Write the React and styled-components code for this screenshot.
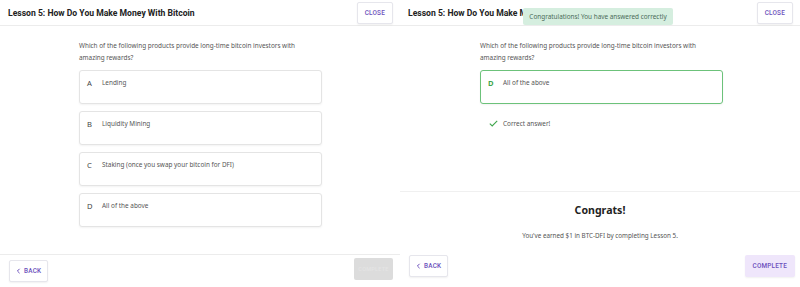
import styled, { createGlobalStyle } from "styled-components";

const GlobalStyle = createGlobalStyle`
  html, body {
    margin: 0;
    padding: 0;
    background: #ffffff;
  }
  body {
    font-family: "Noto Sans", "Open Sans", sans-serif;
    color: #333;
  }
  * {
    box-sizing: border-box;
  }
`;

const Page = styled.div`
  display: flex;
  width: 800px;
  height: 287px;
  overflow: hidden;
`;

const Panel = styled.div`
  position: relative;
  display: flex;
  flex-direction: column;
  width: 400px;
  height: 287px;
  background: #fff;
`;

const Header = styled.div`
  display: flex;
  align-items: center;
  justify-content: space-between;
  height: 26px;
  padding: 0 7px 0 8px;
  border-bottom: 1px solid #ececec;
`;

const Title = styled.h1`
  margin: 0;
  font-family: "Roboto", "Liberation Sans", sans-serif;
  font-weight: 700;
  font-size: 8.6px;
  color: #222;
  white-space: nowrap;
`;

const OutlineButton = styled.button`
  display: flex;
  align-items: center;
  gap: 3px;
  height: 22px;
  padding: 0 ${(p) => p.$padX || 7}px;
  border: 1px solid #e6e6ec;
  border-radius: 2px;
  background: #fff;
  box-shadow: 0 1px 2px rgba(0, 0, 0, 0.06);
  color: #6b4fbb;
  font-family: "Roboto", "Liberation Sans", sans-serif;
  font-size: 6.4px;
  font-weight: 500;
  letter-spacing: 0.2px;
  cursor: pointer;
`;

const Body = styled.div`
  flex: 1;
  display: flex;
  flex-direction: column;
`;

const Quiz = styled.div`
  display: flex;
  flex-direction: column;
  width: 243px;
  margin: 14px 0 0 ${(p) => p.$left}px;
`;

const Question = styled.p`
  margin: 0 0 6px;
  font-size: 6.4px;
  line-height: 12px;
  color: #555;
`;

const Options = styled.div`
  display: flex;
  flex-direction: column;
  gap: 7px;
`;

const Option = styled.div`
  display: flex;
  gap: 8px;
  height: 34px;
  padding: 6px 7px;
  border: ${(p) => (p.$correct ? "1.5px solid #6cc27a" : "1px solid #e4e4e4")};
  border-radius: 3px;
  box-shadow: 0 1px 2px rgba(0, 0, 0, 0.05);
  background: #fff;
`;

const Letter = styled.span`
  font-size: 7.6px;
  line-height: 12px;
  font-weight: ${(p) => (p.$correct ? 700 : 400)};
  color: ${(p) => (p.$correct ? "#3fa64d" : "#444")};
  width: 7px;
`;

const OptionText = styled.span`
  font-size: 6.4px;
  line-height: 12px;
  color: #555;
`;

const Feedback = styled.div`
  display: flex;
  align-items: center;
  gap: 5px;
  margin: 15px 0 0 9px;
  font-size: 6.4px;
  color: #555;
`;

const Congrats = styled.div`
  display: flex;
  flex-direction: column;
  align-items: center;
  margin-top: 63px;
  padding-top: 11px;
  border-top: 1px solid #f0f0f0;
`;

const CongratsTitle = styled.h2`
  margin: 0 0 14px;
  font-size: 10.6px;
  font-weight: 700;
  color: #222;
`;

const CongratsText = styled.p`
  margin: 0;
  font-size: 6.3px;
  color: #555;
`;

const Footer = styled.div`
  display: flex;
  align-items: center;
  justify-content: space-between;
  height: ${(p) => p.$height}px;
  padding: 0 5px 0 9px;
  border-top: ${(p) => (p.$border ? "1px solid #ececec" : "none")};
`;

const FilledButton = styled.button`
  height: 22px;
  width: ${(p) => (p.$disabled ? "39px" : "auto")};
  padding: 0 ${(p) => (p.$disabled ? 0 : 8)}px;
  overflow: hidden;
  white-space: nowrap;
  border: none;
  border-radius: 2px;
  background: ${(p) => (p.$disabled ? "#dcdcdc" : "#efe6fb")};
  color: ${(p) => (p.$disabled ? "#e4e4e4" : "#6b4fbb")};
  box-shadow: ${(p) => (p.$disabled ? "none" : "0 1px 2px rgba(0,0,0,0.06)")};
  font-family: "Roboto", "Liberation Sans", sans-serif;
  font-size: ${(p) => (p.$disabled ? "5.6px" : "6.4px")};
  font-weight: 500;
  letter-spacing: 0.2px;
  align-self: ${(p) => (p.$disabled ? "flex-end" : "center")};
  margin-bottom: ${(p) => (p.$disabled ? "7px" : "0")};
  margin-right: ${(p) => (p.$disabled ? "2px" : "0")};
`;

const Toast = styled.div`
  position: absolute;
  top: 8px;
  left: 123px;
  width: 150px;
  height: 17px;
  display: flex;
  align-items: center;
  justify-content: center;
  background: #d5eedf;
  border-radius: 2px;
  font-size: 6.4px;
  color: #4a6b58;
`;

const Chevron = () => (
  <svg width="5" height="6" viewBox="0 0 5 6" fill="none">
    <path d="M3.6 0.8 L1.4 3 L3.6 5.2" stroke="#6b4fbb" strokeWidth="1" />
  </svg>
);

const Check = () => (
  <svg width="9" height="7" viewBox="0 0 9 7" fill="none">
    <path d="M0.8 3.6 L3.2 6 L8.2 0.8" stroke="#3fa64d" strokeWidth="1.1" />
  </svg>
);

const options = [
  { letter: "A", text: "Lending" },
  { letter: "B", text: "Liquidity Mining" },
  { letter: "C", text: "Staking (once you swap your bitcoin for DFI)" },
  { letter: "D", text: "All of the above" },
];

const question =
  "Which of the following products provide long-time bitcoin investors with amazing rewards?";

function QuestionPanel() {
  return (
    <Panel>
      <Header>
        <Title>Lesson 5: How Do You Make Money With Bitcoin</Title>
        <OutlineButton>CLOSE</OutlineButton>
      </Header>
      <Body>
        <Quiz $left={79}>
          <Question>{question}</Question>
          <Options>
            {options.map((o) => (
              <Option key={o.letter}>
                <Letter>{o.letter}</Letter>
                <OptionText>{o.text}</OptionText>
              </Option>
            ))}
          </Options>
        </Quiz>
      </Body>
      <Footer $height={33} $border>
        <OutlineButton $padX={6}>
          <Chevron />
          BACK
        </OutlineButton>
        <FilledButton $disabled>COMPLETE</FilledButton>
      </Footer>
    </Panel>
  );
}

function ResultPanel() {
  return (
    <Panel>
      <Header>
        <Title>Lesson 5: How Do You Make Money With Bitcoin</Title>
        <OutlineButton>CLOSE</OutlineButton>
      </Header>
      <Toast>Congratulations! You have answered correctly</Toast>
      <Body>
        <Quiz $left={80}>
          <Question>{question}</Question>
          <Option $correct>
            <Letter $correct>D</Letter>
            <OptionText>All of the above</OptionText>
          </Option>
          <Feedback>
            <Check />
            Correct answer!
          </Feedback>
        </Quiz>
        <Congrats>
          <CongratsTitle>Congrats!</CongratsTitle>
          <CongratsText>
            You've earned $1 in BTC-DFI by completing Lesson 5.
          </CongratsText>
        </Congrats>
      </Body>
      <Footer $height={43}>
        <OutlineButton $padX={6}>
          <Chevron />
          BACK
        </OutlineButton>
        <FilledButton>COMPLETE</FilledButton>
      </Footer>
    </Panel>
  );
}

export default function App() {
  return (
    <>
      <GlobalStyle />
      <Page>
        <QuestionPanel />
        <ResultPanel />
      </Page>
    </>
  );
}
